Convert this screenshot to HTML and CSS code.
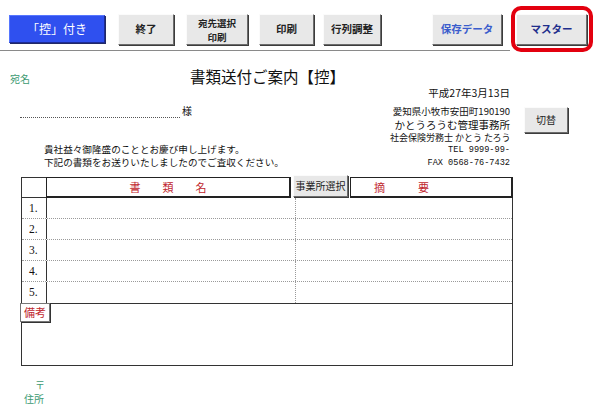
FILE: index.html
```html
<!DOCTYPE html>
<html lang="ja">
<head>
<meta charset="utf-8">
<title>書類送付ご案内</title>
<link rel="stylesheet" href="styles.css">
</head>
<body>
<div class="toolbar">
  <button class="btn btn-blue">「控」付き</button>
  <button class="btn b-end">終了</button>
  <button class="btn b-addr"><span class="ln">宛先選択</span><span class="ln">印刷</span></button>
  <button class="btn b-print">印刷</button>
  <button class="btn b-adjust">行列調整</button>
  <button class="btn b-save">保存データ</button>
  <div class="highlight"><button class="btn b-master">マスター</button></div>
</div>

<div class="title-row">
  <span class="atena">宛名</span>
  <span class="title">書類送付ご案内【控】</span>
</div>
<div class="date-row">平成27年3月13日</div>

<div class="mid-row">
  <div class="letter">
    <div class="sama"><span class="dots"></span><span class="sama-text">様</span></div>
    <div class="greet">
      <div>貴社益々御隆盛のこととお慶び申し上げます。</div>
      <div>下記の書類をお送りいたしましたのでご査収ください。</div>
    </div>
  </div>
  <div class="addr">
    <div class="a1">愛知県小牧市安田町190190</div>
    <div class="a2">かとうろうむ管理事務所</div>
    <div class="a3">社会保険労務士 かとう たろう</div>
    <div class="a4">TEL 9999-99-</div>
    <div class="a4">FAX 0568-76-7432</div>
  </div>
  <button class="btn b-switch">切替</button>
</div>

<div class="thead">
  <div class="th-num"></div>
  <div class="th-name">書　　類　　名</div>
  <button class="btn b-select">事業所選択</button>
  <div class="th-sum">摘　　　要</div>
</div>
<div class="tbody">
  <div class="row"><div class="c-num">1.</div><div class="c-name"></div><div></div></div>
  <div class="row"><div class="c-num">2.</div><div class="c-name"></div><div></div></div>
  <div class="row"><div class="c-num">3.</div><div class="c-name"></div><div></div></div>
  <div class="row"><div class="c-num">4.</div><div class="c-name"></div><div></div></div>
  <div class="row last"><div class="c-num">5.</div><div class="c-name"></div><div></div></div>
</div>
<div class="biko"><div class="biko-label">備考</div></div>

<div class="addr-labels">
  <div class="zip">〒</div>
  <div class="jusho">住所</div>
</div>
</body>
</html>
```

FILE: styles.css
```css
body {
  margin: 0;
  width: 598px;
  height: 415px;
  overflow: hidden;
  background: #fff;
  color: #111;
  font-family: "Noto Sans CJK JP", "Liberation Sans", sans-serif;
}

.toolbar {
  display: flex;
  align-items: flex-start;
  height: 51px;
  box-sizing: border-box;
  padding-top: 14px;
  background: linear-gradient(#8a8a8a, #8a8a8a) no-repeat 0 100% / 510px 1px;
}

.btn {
  font-family: "Noto Sans CJK JP", sans-serif;
  box-sizing: border-box;
  padding: 0;
  margin: 0;
  height: 31px;
  background: #e8e8e8;
  border: 1px solid;
  border-color: #fbfbfb #6c6c6c #6c6c6c #fbfbfb;
  box-shadow: 1px 1px 0 #3c3c3c;
  font-size: 10.5px;
  font-weight: bold;
  line-height: 1.2;
  color: #222;
}

.btn-blue {
  margin: 1px 0 0 9px;
  width: 96px;
  height: 28px;
  background: #2f50ef;
  border-color: #5676ff #1d2c95 #1d2c95 #5676ff;
  box-shadow: 1px 1px 0 #222a66;
  color: #fff;
  font-weight: normal;
  font-size: 12px;
}

.b-end { margin-left: 13px; width: 56px; }
.b-addr {
  margin-left: 12px;
  width: 62px;
  font-size: 9.5px;
  line-height: 14px;
  display: flex;
  flex-direction: column;
  align-items: center;
  justify-content: center;
}
.ln { display: block; height: 14px; }
.b-print { margin-left: 11px; width: 55px; }
.b-adjust { margin-left: 9px; width: 58px; }
.b-save { margin-left: 51px; width: 70px; color: #3a5ccc; }

.highlight {
  margin: -8px 0 0 9px;
  width: 82px;
  height: 46px;
  box-sizing: border-box;
  border: 4px solid #e3000f;
  border-radius: 10px;
  padding: 4px 0 0 1px;
}

.b-master { width: 71px; color: #1f2f8c; }

.title-row {
  display: flex;
  align-items: baseline;
  height: 20px;
  margin-top: 15px;
}

.atena {
  width: 190px;
  padding-left: 10px;
  box-sizing: border-box;
  font-size: 10px;
  color: #3d9a72;
}

.title {
  font-size: 15.5px;
  line-height: 20px;
}

.date-row {
  width: 510px;
  margin-top: 1px;
  text-align: right;
  font-size: 10.5px;
  line-height: 12px;
}

.mid-row {
  display: flex;
  height: 76px;
}

.letter { width: 390px; }

.sama {
  display: flex;
  align-items: flex-end;
  height: 13px;
  margin: 6px 0 0 20px;
}

.dots {
  width: 160px;
  height: 11px;
  border-bottom: 1px dotted #555;
}

.sama-text {
  margin: 0 0 2px 2px;
  font-size: 10px;
  line-height: 11px;
}

.greet {
  margin: 25px 0 0 44px;
  font-size: 9.6px;
  line-height: 12.5px;
  white-space: nowrap;
}

.addr {
  width: 120px;
  margin-top: 6px;
  text-align: right;
  white-space: nowrap;
  direction: rtl;
  line-height: 13px;
}

.addr > div { direction: ltr; unicode-bidi: isolate; }

.a1 { font-size: 9.5px; }
.a2 { font-size: 10.5px; }
.a3 { font-size: 9px; }
.a4 { font-family: "Liberation Mono", monospace; font-size: 8.6px; }

.b-switch {
  margin: 8px 0 0 14px;
  width: 44px;
  height: 26px;
  font-weight: normal;
  font-size: 10px;
}

.thead {
  display: flex;
  align-items: flex-end;
  height: 23px;
  margin-left: 21px;
}

.th-num {
  width: 25px;
  height: 21px;
  box-sizing: border-box;
  border: 1px solid #333;
  border-right: none;
}

.th-name,
.th-sum {
  height: 21px;
  box-sizing: border-box;
  border: 1px solid #222;
  border-right-width: 2px;
  border-bottom-width: 2px;
  color: #c0262d;
  font-size: 11px;
  line-height: 18px;
}

.th-name {
  width: 245px;
  text-align: center;
}

.b-select {
  align-self: flex-start;
  margin-left: 2px;
  width: 55px;
  height: 22px;
  font-weight: normal;
  font-size: 10px;
}

.th-sum {
  margin-left: 2px;
  width: 163px;
  padding-left: 23px;
}

.tbody {
  margin-left: 21px;
  width: 492px;
  box-sizing: border-box;
  border-left: 1px solid #333;
  border-right: 1px solid #333;
}

.row {
  display: grid;
  grid-template-columns: 25px 249px 1fr;
  height: 21px;
  box-sizing: border-box;
  border-bottom: 1px dotted #9a9a9a;
}

.row.last { border-bottom: none; }

.c-num {
  border-right: 1px solid #333;
  font-family: "Liberation Serif", serif;
  font-size: 11.5px;
  line-height: 20px;
  padding-left: 7px;
}

.c-name { border-right: 1px dotted #9a9a9a; }

.biko {
  position: relative;
  margin-left: 21px;
  width: 492px;
  height: 63px;
  box-sizing: border-box;
  border: 1px solid #333;
}

.biko-label {
  position: absolute;
  left: -2px;
  top: -1px;
  width: 30px;
  height: 19px;
  box-sizing: border-box;
  border: 1px solid #777;
  box-shadow: 1px 1px 0 #333;
  background: #fff;
  color: #c0262d;
  font-size: 11px;
  line-height: 17px;
  text-align: center;
}

.addr-labels {
  margin-top: 12px;
  color: #3d9a72;
  font-size: 10px;
  line-height: 14px;
}

.zip { padding-left: 35px; }
.jusho { padding-left: 24px; }
```
